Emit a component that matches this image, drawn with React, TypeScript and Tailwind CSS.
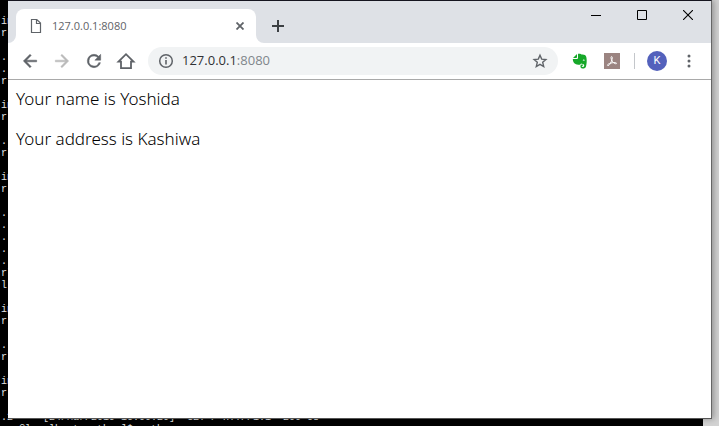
import React from "react";

const terminalLines = [
  "", "in", "r", "", ".:", ".:", "rl", "", "in", "r", "", ".:", "rl", "", "in", "r", "",
  ".:", ".:", ".:", ".:", ".:", "rl", "l", "", "in", "r", "", ".:", "rl", "", "in", "r", "",
  '.2 - - [24/Mar/2019 16:00:20] "GET / HTTP/1.1" 200 68',
  "   @localhost python]$ python",
];

const iconButton = "flex h-8 w-8 shrink-0 items-center justify-center text-[#5f6368]";

function Terminal() {
  return (
    <div className="absolute inset-y-0 left-0 right-4 overflow-hidden bg-black pl-px pt-1 font-['Liberation_Mono',monospace] text-[10px] leading-[12px] text-[#e4e4e4]">
      {terminalLines.map((line, index) => (
        <pre key={index} className="h-3 w-fit font-['Liberation_Mono',monospace]">{line}</pre>
      ))}
    </div>
  );
}

function TabStrip() {
  return (
    <header className="flex h-[42px] items-end bg-[#dee1e6]">
      <div className="relative flex h-[34px] w-62 items-center">
        <svg className="absolute bottom-0 left-0 h-2 w-2" viewBox="0 0 8 8" aria-hidden="true">
          <path d="M0 8h8V0a8 8 0 0 1-8 8z" fill="#fff" />
        </svg>
        <svg className="absolute -right-2 bottom-0 h-2 w-2" viewBox="0 0 8 8" aria-hidden="true">
          <path d="M0 0v8h8a8 8 0 0 1-8-8z" fill="#fff" />
        </svg>
        <div className="ml-2 flex h-full flex-1 items-center rounded-t-lg bg-white pl-[14px] pr-2">
          <svg className="h-[14px] w-3 shrink-0" viewBox="0 0 12 14" fill="none" stroke="#5f6368" aria-hidden="true">
            <path d="M1.500.5h5.200L10.500 4v9.500h-9zM6.500.5V4.500h4" strokeWidth="1.200" />
          </svg>
          <span className="ml-[10px] flex-1 pt-px font-['Open_Sans',sans-serif] text-[11px] text-[#5f6368]">127.0.0.1:8080</span>
          <button aria-label="Close tab" className="flex h-4 w-4 items-center justify-center">
            <svg className="h-2 w-2" viewBox="0 0 8 8" stroke="#5f6368" strokeWidth="1.800">
              <path d="M.5.5l7 7M7.500.5l-7 7" />
            </svg>
          </button>
        </div>
      </div>
      <button aria-label="New tab" className="mb-[3px] ml-2 flex h-7 w-7 items-center justify-center">
        <svg className="h-3 w-3" viewBox="0 0 12 12" stroke="#3c4043" strokeWidth="2">
          <path d="M6 0v12M0 6h12" />
        </svg>
      </button>
      <div className="ml-auto flex h-full items-start">
        <button aria-label="Minimize" className="flex h-7 w-[46px] items-center justify-center">
          <svg className="h-[10px] w-[10px]" viewBox="0 0 10 10" stroke="#000"><path d="M0 5.500h10" /></svg>
        </button>
        <button aria-label="Maximize" className="flex h-7 w-[46px] items-center justify-center">
          <svg className="h-[10px] w-[10px]" viewBox="0 0 10 10" fill="none" stroke="#000"><path d="M.5.5h9v9h-9z" /></svg>
        </button>
        <button aria-label="Close" className="flex h-7 w-[46px] items-center justify-center">
          <svg className="h-[10px] w-[10px]" viewBox="0 0 10 10" stroke="#000" strokeWidth="1.100"><path d="M0 0l10 10M10 0L0 10" /></svg>
        </button>
      </div>
    </header>
  );
}

function Toolbar() {
  return (
    <nav className="flex h-[37px] items-center border-b border-[#a9a9a9] pl-[6px] pr-[6px]">
      <button aria-label="Back" className={iconButton}>
        <svg className="h-5 w-5" viewBox="0 0 24 24" fill="currentColor"><path d="M20 11H7.830l5.590-5.590L12 4l-8 8 8 8 1.410-1.410L7.830 13H20z" stroke="currentColor" strokeWidth=".6" /></svg>
      </button>
      <button aria-label="Forward" className="flex h-8 w-8 shrink-0 items-center justify-center text-[#bababa]">
        <svg className="h-5 w-5" viewBox="0 0 24 24" fill="currentColor"><path d="M12 4l-1.410 1.410L16.170 11H4v2h12.170l-5.580 5.590L12 20l8-8z" stroke="currentColor" strokeWidth=".6" /></svg>
      </button>
      <button aria-label="Reload" className={iconButton}>
        <svg className="h-5 w-5" viewBox="0 0 24 24" fill="currentColor"><path d="M17.650 6.350A7.960 7.960 0 0 0 12 4a8 8 0 1 0 7.730 10h-2.080A6 6 0 1 1 12 6c1.660 0 3.140.69 4.220 1.780L13 11h7V4z" stroke="currentColor" strokeWidth=".6" /></svg>
      </button>
      <button aria-label="Home" className={iconButton}>
        <svg className="h-5 w-5" viewBox="0 0 20 20" fill="none" stroke="currentColor" strokeWidth="1.800"><path d="M2.500 10.600H5v6.500h10v-6.500h2.500L10 3.200z" /></svg>
      </button>
      <div className="ml-[6px] flex h-7 min-w-0 flex-1 items-center rounded-full bg-[#f1f3f4] pl-[10px] pr-[10px]">
        <svg className="h-4 w-4 shrink-0" viewBox="0 0 16 16" fill="none" stroke="#5f6368" strokeWidth="1.500" aria-hidden="true">
          <circle cx="8" cy="8" r="6.300" /><path d="M8 7v4.500M8 4.300v1.500" strokeWidth="1.600" />
        </svg>
        <div className="ml-2 flex-1 font-['Open_Sans',sans-serif] text-[13px] text-[#303134]">
          127.0.0.1<span className="text-[#80868b]">:8080</span>
        </div>
        <button aria-label="Bookmark this page" className="h-4 w-4">
          <svg viewBox="0 0 16 16" fill="none" stroke="#5f6368" strokeWidth="1.400"><path d="M8 2.200l1.700 3.900 4.200.4-3.200 2.800 1 4.200L8 11.300l-3.700 2.200 1-4.200-3.200-2.800 4.200-.4z" /></svg>
        </button>
      </div>
      <button aria-label="Evernote" className="ml-[14px] h-4 w-4 shrink-0">
        <svg viewBox="0 0 16 16" fill="#16a829"><path d="M1 5L5 1v3.200Q5 5 4 5zM6 .8c2-.3 3 0 3.500.8 1.500.1 3.400.3 4 .9C15 4 15.100 10 14 13.500c-.6 1.700-2 2.200-3.600 2-1.500-.2-2-1-2-2.200 0-1.400 1-2 2.500-1.800v1.200c-.8-.1-1.200.1-1.200.6 0 .7 1.900.8 2.300.1.300-.5.300-1 .1-1.600-.6-.9-2.100-1-3.100-1.400-.3 1.200-1 1.500-2.800 1.300C3 11.300 1 10 .8 6H4.500C5.600 6 6 5.500 6 4.500z" /><path d="M10.700 7.500c.2-1.300 1.900-1.300 2 .2z" fill="#fff" /></svg>
      </button>
      <button aria-label="Adobe Acrobat" className="ml-4 h-4 w-4 shrink-0">
        <svg viewBox="0 0 16 16"><path fill="#9b8481" d="M0 0h16v16H0z" /><path d="M3.600 12.500c-1.200-.9 3-3 7.300-2.900 2.300.1 2.100 1.500.5 1.100C9 10.100 7 6.800 7 4.600c0-1.500 1.300-1.300 1.300.1 0 2.600-3 9-4.700 7.800z" fill="none" stroke="#fff" strokeWidth="1" /></svg>
      </button>
      <span className="ml-[14px] h-4 w-px bg-[#c4c7cb]" />
      <button aria-label="Profile" className="ml-3 flex h-5 w-5 shrink-0 items-center justify-center rounded-full bg-[#5361bc] font-[Roboto,sans-serif] text-[11px] text-white">K</button>
      <button aria-label="Menu" className="ml-[6px] flex h-8 w-8 shrink-0 items-center justify-center">
        <svg className="h-4 w-4" viewBox="0 0 16 16" fill="#5f6368"><circle cx="8" cy="3" r="1.500" /><circle cx="8" cy="8" r="1.500" /><circle cx="8" cy="13" r="1.500" /></svg>
      </button>
    </nav>
  );
}

export default function App() {
  return (
    <div className="relative h-screen overflow-hidden bg-[#d2d2d2]">
      <Terminal />
      <div className="absolute bottom-[7px] left-2 right-[7px] top-0 flex flex-col border-b border-r border-t border-b-[#555] border-r-[#666] border-t-[#15151f] bg-white shadow-[2px_0_6px_rgba(0,0,0,0.3)]">
        <TabStrip />
        <Toolbar />
        <main className="flex flex-col gap-4 px-2 py-[7px] font-['Noto_Sans',sans-serif] text-[17px] font-light leading-6 text-black">
          <p>Your name is Yoshida</p>
          <p>Your address is Kashiwa</p>
        </main>
      </div>
    </div>
  );
}
